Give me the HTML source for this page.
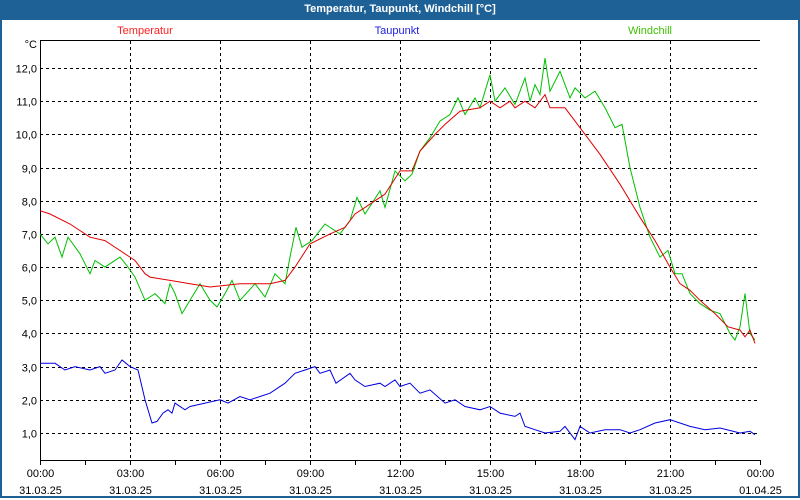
<!DOCTYPE html>
<html><head><meta charset="utf-8"><style>
html,body{margin:0;padding:0;}
body{width:800px;height:500px;overflow:hidden;background:#fff;font-family:"Liberation Sans",Arial,sans-serif;}
.frame{position:absolute;left:0;top:0;width:796px;height:496px;border:2px solid #1e6197;border-top:none;}
.title{position:absolute;left:0;top:0;width:800px;height:20px;background:#1e6197;color:#fff;font-weight:bold;font-size:11px;text-align:center;line-height:19px;}
svg{position:absolute;left:0;top:0;}
text{font-family:"Liberation Sans",Arial,sans-serif;font-size:11px;}
</style></head><body>
<div class="frame"></div>
<div class="title">Temperatur, Taupunkt, Windchill [°C]</div>
<svg id="s" width="800" height="500" xmlns="http://www.w3.org/2000/svg">
<g id="grid" stroke="#000" stroke-width="1" stroke-dasharray="3,3" shape-rendering="crispEdges"></g>
<g stroke="#000" stroke-width="1" shape-rendering="crispEdges">
<line x1="40.5" y1="40" x2="40.5" y2="461"/>
<line x1="40" y1="40.5" x2="760" y2="40.5"/>
<line x1="40" y1="460.5" x2="761" y2="460.5"/>
</g>
<g id="ticks" stroke="#000" shape-rendering="crispEdges"></g>
<g id="lbl"></g>
<text x="145" y="34" fill="#ff2020" text-anchor="middle">Temperatur</text>
<text x="397" y="34" fill="#2020e0" text-anchor="middle">Taupunkt</text>
<text x="650" y="34" fill="#40c000" text-anchor="middle">Windchill</text>
<text x="37" y="48" text-anchor="end" fill="#000">°C</text>
<polyline id="g" fill="none" stroke="#00c000" stroke-width="1"/>
<polyline id="r" fill="none" stroke="#e00000" stroke-width="1"/>
<polyline id="b" fill="none" stroke="#0000e0" stroke-width="1"/>
</svg>
<script>
var NS="http://www.w3.org/2000/svg";
function Y(v){return 433-(v-1)*33.18;}
function el(p,t,a,txt){var e=document.createElementNS(NS,t);for(var k in a)e.setAttribute(k,a[k]);if(txt)e.textContent=txt;document.getElementById(p).appendChild(e);}
for(var v=1;v<=12;v++){var y=Math.round(Y(v))+0.5;el('grid','line',{x1:40,y1:y,x2:760,y2:y});
el('lbl','text',{x:37,y:y+4,'text-anchor':'end',fill:'#000'},v+',0');}
var times=['00:00','03:00','06:00','09:00','12:00','15:00','18:00','21:00','00:00'];
for(var i=0;i<=8;i++){var x=40+i*90+0.5;if(i>0&&i<8)el('grid','line',{x1:x,y1:41,x2:x,y2:460});
el('lbl','text',{x:x,y:477,'text-anchor':'middle',fill:'#000'},times[i]);
el('lbl','text',{x:x,y:494,'text-anchor':'middle',fill:'#000'},i==8?'01.04.25':'31.03.25');}
for(var i=0;i<=16;i++){var x=40+i*45+0.5;el('ticks','line',{x1:x,y1:460,x2:x,y2:465});}
function P(id,d){var s=[];for(var i=0;i<d.length;i+=2)s.push(d[i]+','+Y(d[i+1]).toFixed(1));document.getElementById(id).setAttribute('points',s.join(' '));}
P('r',[40,7.7,50,7.6,70,7.3,90,6.9,105,6.8,120,6.5,135,6.2,145,5.8,150,5.7,170,5.6,190,5.5,210,5.4,240,5.5,270,5.5,285,5.6,295,6.0,310,6.7,330,7.0,345,7.2,355,7.6,365,7.8,385,8.2,400,8.9,412,8.9,420,9.5,435,10.0,445,10.3,460,10.7,480,10.8,490,11.0,500,10.8,510,11.0,515,10.8,525,11.0,535,10.8,545,11.2,550,10.8,565,10.8,580,10.2,600,9.4,620,8.5,640,7.5,655,6.8,670,6.0,680,5.5,690,5.3,700,5.0,715,4.6,728,4.2,740,4.1,745,3.9,750,4.1,755,3.7]);
P('g',[40,7.0,48,6.7,55,6.9,62,6.3,68,6.9,80,6.4,90,5.8,95,6.2,105,6.0,120,6.3,128,6.0,135,5.7,145,5.0,155,5.2,165,4.9,170,5.5,175,5.2,182,4.6,190,5.0,200,5.5,210,5.0,217,4.8,225,5.2,232,5.6,240,5.0,255,5.5,265,5.1,275,5.8,285,5.5,290,6.3,296,7.2,302,6.6,312,6.8,325,7.3,340,7.0,350,7.4,357,8.1,365,7.6,380,8.3,385,7.8,395,8.9,405,8.6,412,8.8,420,9.5,430,9.9,440,10.4,450,10.6,458,11.1,465,10.6,475,11.1,480,10.8,490,11.8,495,11.0,505,11.4,515,10.9,525,11.7,530,11.0,535,11.5,540,11.2,545,12.3,550,11.3,560,11.9,570,11.1,575,11.4,585,11.1,595,11.3,605,10.8,615,10.2,622,10.3,630,9.0,640,7.8,650,6.9,660,6.3,668,6.5,675,5.8,682,5.8,690,5.2,700,4.9,710,4.7,720,4.6,730,4.0,735,3.8,740,4.2,745,5.2,750,4.0,755,3.8]);
P('b',[40,3.1,55,3.1,65,2.9,75,3.0,90,2.9,100,3.0,105,2.8,115,2.9,122,3.2,130,3.0,138,2.9,145,2.0,152,1.3,157,1.35,163,1.6,168,1.7,172,1.6,175,1.9,185,1.7,190,1.8,205,1.9,220,2.0,228,1.9,240,2.1,250,2.0,260,2.1,270,2.2,285,2.5,295,2.8,305,2.9,315,3.0,320,2.8,330,2.9,336,2.5,350,2.8,355,2.6,365,2.4,380,2.5,385,2.4,395,2.6,400,2.4,410,2.5,420,2.2,430,2.3,445,1.9,455,2.0,465,1.8,480,1.7,490,1.8,500,1.6,515,1.5,520,1.6,525,1.2,535,1.1,545,1.0,560,1.05,565,1.2,575,0.8,580,1.2,590,1.0,605,1.1,620,1.1,630,1.0,640,1.1,655,1.3,670,1.4,680,1.3,690,1.2,705,1.1,720,1.15,740,1.0,750,1.05,755,0.95]);
</script>
</body></html>
